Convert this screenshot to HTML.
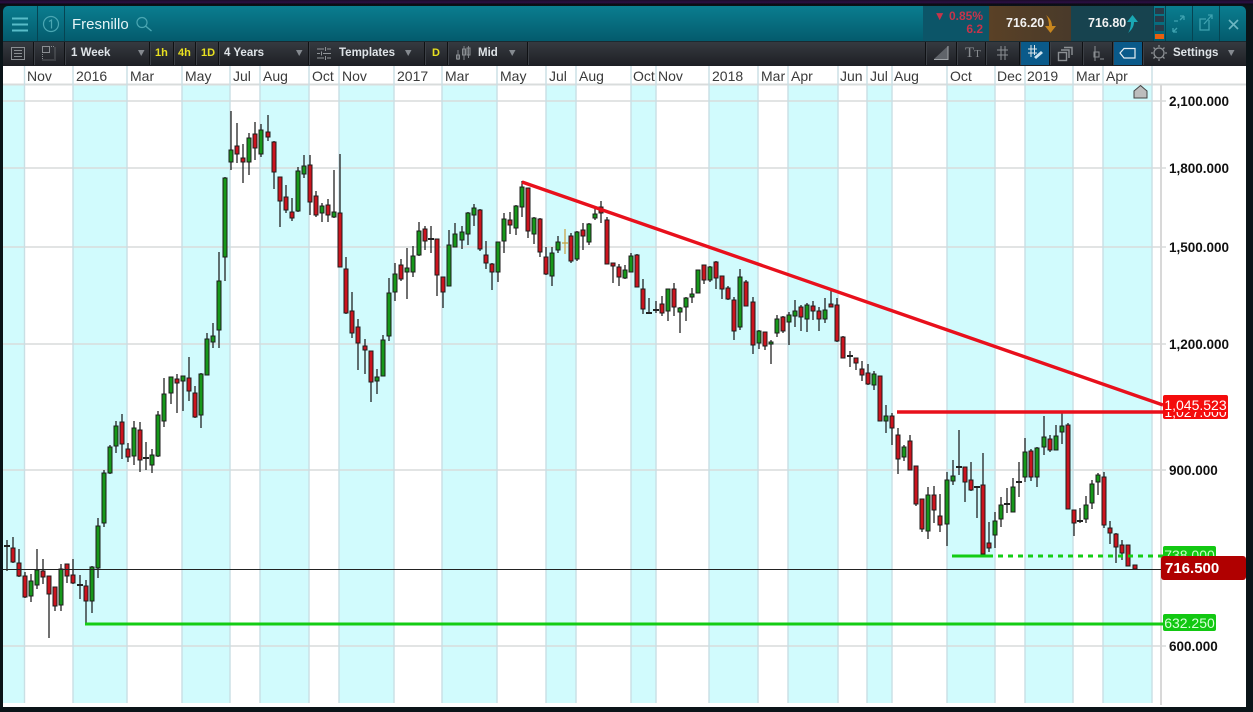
<!DOCTYPE html>
<html><head><meta charset="utf-8"><title>Fresnillo</title>
<style>
html,body{margin:0;padding:0;background:#0a1418;width:1253px;height:712px;overflow:hidden}
body{position:relative;font-family:"Liberation Sans",sans-serif}
.a{position:absolute;white-space:nowrap}
#top{left:0;top:0;width:1253px;height:6px;background:linear-gradient(#1a0c28 0,#2c0f44 40%,#0c0c14 70%,#0a1418 100%)}
#hd{left:3px;top:6px;width:1243px;height:35px;border-radius:5px 5px 0 0;background:linear-gradient(#0a7d90,#045b6d)}
#tb{left:3px;top:41px;width:1243px;height:25px;background:linear-gradient(#363a40,#1d1f24);border-top:1px solid #1a2a30;box-sizing:border-box}
#wh{left:3px;top:66px;width:1243px;height:641px;background:#fff}
.t{font-size:11.5px;font-weight:bold;color:#dfe4e8;line-height:14px;top:46px}
.y{font-size:11px;font-weight:bold;color:#e8e020;line-height:14px;top:46px}
.d{width:1px;height:23px;top:42px;background:#0f1114;box-shadow:1px 0 0 #3c4046}
.m{font-size:14px;color:#3a3a3a;top:68px;line-height:16px}
.p{font-size:13.5px;font-weight:bold;color:#111;left:1169px;line-height:16px}
.tag{color:#fff;font-size:14px;line-height:16px;border-radius:2px;overflow:hidden;text-align:center}
</style></head><body>
<div class="a" id="top"></div>
<div class="a" id="hd"></div>
<div class="a" style="left:923px;top:6px;width:66px;height:35px;background:#0c5568"></div>
<div class="a" style="left:989px;top:6px;width:82px;height:35px;background:linear-gradient(90deg,#5a4126,#493a2a)"></div>
<div class="a" style="left:1071px;top:6px;width:82px;height:35px;background:#17434f"></div>
<div class="a" style="left:930px;top:10px;width:53px;text-align:right;font-size:12px;font-weight:bold;line-height:13px;color:#c8344a">▼ 0.85%<br>6.2</div>
<div class="a" style="left:1006px;top:16px;font-size:12.5px;font-weight:bold;color:#f2f2f2;line-height:15px">716.20</div>
<div class="a" style="left:1088px;top:16px;font-size:12.5px;font-weight:bold;color:#f2f2f2;line-height:15px">716.80</div>
<div class="a" style="left:72px;top:16px;font-size:15px;line-height:18px;color:#e4f4f6">Fresnillo</div>
<div class="a" id="tb"></div>
<div class="a" id="wh"></div>

<svg class="a" style="left:0;top:0" width="1253" height="712" id="s" xmlns="http://www.w3.org/2000/svg">
<g id="bands" fill="#d1fbfd"><rect x="3" y="85" width="21.5" height="618"/><rect x="73" y="85" width="54" height="618"/><rect x="182" y="85" width="48" height="618"/><rect x="260" y="85" width="49" height="618"/><rect x="339" y="85" width="55" height="618"/><rect x="442" y="85" width="55" height="618"/><rect x="546" y="85" width="30" height="618"/><rect x="631" y="85" width="25" height="618"/><rect x="709" y="85" width="49" height="618"/><rect x="788" y="85" width="50" height="618"/><rect x="867" y="85" width="25" height="618"/><rect x="947" y="85" width="48" height="618"/><rect x="1025" y="85" width="48" height="618"/><rect x="1103" y="85" width="49" height="618"/></g>
<path fill="none" stroke="#d8dcdc" stroke-width="1.4" d="M3 101H1166M3 168H1166M3 247H1166M3 344H1166M3 470H1166M3 646H1166"/>
<path fill="none" stroke="#d9dcdc" stroke-width="2" d="M3 84.5H1246"/>
<path fill="none" stroke="#c9dfe4" stroke-width="1.4" d="M24.5 66V703M73 66V703M127 66V703M182 66V703M230 66V703M260 66V703M309 66V703M339 66V703M394 66V703M442 66V703M497 66V703M546 66V703M576 66V703M631 66V703M656 66V703M709 66V703M758 66V703M788 66V703M838 66V703M867 66V703M892 66V703M947 66V703M995 66V703M1025 66V703M1073 66V703M1103 66V703M1152 66V703"/>
<path fill="none" stroke="#d8d8d8" stroke-width="2" d="M1161 85V705"/>
<g id="candles"></g>
<path d="M3 569.5H1163" stroke="#222" stroke-width="1" fill="none"/>
<path d="M522 182L1163 405M897 412H1163" stroke="#e8101c" stroke-width="3.4" fill="none"/>
<path d="M85 624H1163M952 556H993" stroke="#14cc14" stroke-width="3" fill="none"/>
<path d="M998 556H1163" stroke="#14cc14" stroke-width="3" stroke-dasharray="5 5" fill="none"/>
<polygon points="1140.5,85.5 1147,91 1147,98 1134,98 1134,91" fill="#bdbdbd" stroke="#444"/>

<!-- header icons -->
<path d="M37.5 6V41M64.5 6V41" stroke="#064452" stroke-width="1"/>
<path d="M12 18.5H28M12 24.5H28M12 30.5H28" stroke="#58bcc8" stroke-width="2"/>
<circle cx="51" cy="24" r="7.5" fill="none" stroke="#4aa6b2" stroke-width="1.2"/>
<path d="M49 21.5L51.5 20V28.5" fill="none" stroke="#4aa6b2" stroke-width="1.2"/>
<circle cx="142" cy="22.5" r="5" fill="none" stroke="#4aa6b2" stroke-width="1.2"/>
<path d="M145.5 26L151.5 31" stroke="#4aa6b2" stroke-width="1.4"/>
<path d="M1046 15C1051 19 1052 23 1052 26H1056L1050.5 33L1045 26H1049C1049 22 1048 18 1046 15Z" fill="#c8861e"/>
<path d="M1128 33C1133 29 1134 25 1134 22H1138L1132.5 15L1127 22H1131C1131 26 1130 30 1128 33Z" fill="#1aa8b4"/>
<rect x="1155" y="8" width="9" height="6" fill="#2a3a48"/><rect x="1155" y="16" width="9" height="6" fill="#2a3a48"/><rect x="1155" y="25" width="9" height="6" fill="#2a3a48"/><rect x="1155" y="34" width="9" height="5" fill="#e8600e"/>
<path d="M1165.5 6V41M1192.5 6V41M1219.5 6V41M1153.5 6V41" stroke="#064452" stroke-width="1"/>
<path d="M1174 21L1178 21M1184 16L1180 20M1184 16H1180M1184 16V20M1173 32L1177 28M1173 32H1177M1173 32V28" fill="none" stroke="#3fa2b0" stroke-width="1.3"/>
<path d="M1209 20V30H1200V19H1206M1204 24L1212 15M1208 15H1212V19" fill="none" stroke="#3fa2b0" stroke-width="1.3"/>
<path d="M1229 20L1238 29M1238 20L1229 29" stroke="#6cb6c2" stroke-width="1.6"/>

<!-- toolbar left icons -->
<g fill="none" stroke="#8a8e92" stroke-width="1">
<rect x="11.5" y="47.5" width="13" height="12"/><path d="M14 50.5H22M14 53.5H22M14 56.5H22"/>
<rect x="42.5" y="46.5" width="7" height="6"/><path d="M42.5 54V60H55V47M51 46.5H55" stroke-dasharray="1 1"/>
<path d="M317 49H324M327 49H331M317 53.5H320M323 53.5H331M317 58H324M327 58H331M325.5 47V51M321.5 51.5V55.5M325.5 56V60" stroke="#909498"/>
<path d="M458 50V60M464 46V60M468.5 46V58" stroke="#80848a"/><rect x="456.5" y="55" width="3" height="4"/><rect x="462.5" y="49" width="3" height="6"/><rect x="467" y="48" width="3" height="7"/>
</g>
<g fill="#858a90"><path d="M138 50H144.5L141.2 56Z"/><path d="M296 50H302.5L299.2 56Z"/><path d="M405 50H411.5L408.2 56Z"/><path d="M509 50H515.5L512.2 56Z"/><path d="M1228 50H1234.5L1231.2 56Z"/></g>

<!-- toolbar right icons -->
<rect x="1020" y="42" width="29" height="23" fill="#0a5a8a"/><rect x="1112" y="42" width="30" height="23" fill="#0a5a8a"/>
<path d="M934 59L948 46V59Z" fill="#60646a"/><path d="M934 59.5H948V46" fill="none" stroke="#a0a4a8" stroke-width="1"/>
<path d="M997 50H1008M997 55H1008M1001 46V60M1005 46V60" stroke="#8c9094" fill="none"/>
<path d="M1028 49H1037M1028 53H1037M1031 45V57M1034.5 45V55" stroke="#dfe6ea" fill="none"/>
<path d="M1034 57L1041 51L1043 53L1036 59Z" fill="#cde4f0"/>
<g fill="none" stroke="#8c9094" stroke-width="1.4"><rect x="1058.5" y="52.5" width="8" height="8"/><path d="M1061 50H1069V58M1064 47.5H1072V55"/></g>
<path d="M1095 46V61M1094 52H1099V57H1094ZM1100 59H1104" fill="none" stroke="#8c9094"/>
<path d="M1120 53L1124 48.5H1135V58H1124Z" fill="none" stroke="#e6eef2" stroke-width="1.2"/>
<circle cx="1159" cy="53" r="5" fill="none" stroke="#8c9094" stroke-width="1.3"/>
<path d="M1159 45V47M1159 59V61M1151 53H1153M1165 53H1167M1153.5 47.5L1155 49M1163 57L1164.5 58.5M1153.5 58.5L1155 57M1163 49L1164.5 47.5" stroke="#8c9094" stroke-width="1.3"/>
</svg>

<div class="a d" style="left:33px"></div><div class="a d" style="left:64px"></div><div class="a d" style="left:149px"></div><div class="a d" style="left:173px"></div><div class="a d" style="left:195px"></div><div class="a d" style="left:218px"></div><div class="a d" style="left:308px"></div><div class="a d" style="left:424px"></div><div class="a d" style="left:447px"></div><div class="a d" style="left:527px"></div><div class="a d" style="left:925px"></div><div class="a d" style="left:956px"></div><div class="a d" style="left:985px"></div><div class="a d" style="left:1019px"></div><div class="a d" style="left:1049px"></div><div class="a d" style="left:1082px"></div><div class="a d" style="left:1112px"></div><div class="a d" style="left:1142px"></div>
<div class="a t" style="left:71px">1 Week</div>
<div class="a y" style="left:155px">1h</div><div class="a y" style="left:178px">4h</div><div class="a y" style="left:201px">1D</div>
<div class="a t" style="left:224px">4 Years</div>
<div class="a t" style="left:339px">Templates</div>
<div class="a y" style="left:432px">D</div>
<div class="a t" style="left:478px">Mid</div>
<div class="a" style="left:965px;top:45px;font-family:'Liberation Serif',serif;font-size:15px;color:#888c90;line-height:16px">T<span style="font-size:11px">T</span></div>
<div class="a t" style="left:1173px;font-size:11.5px">Settings</div>

<div class="a m" style="left:27px">Nov</div><div class="a m" style="left:76px">2016</div><div class="a m" style="left:130px">Mar</div><div class="a m" style="left:185px">May</div><div class="a m" style="left:233px">Jul</div><div class="a m" style="left:263px">Aug</div><div class="a m" style="left:312px">Oct</div><div class="a m" style="left:342px">Nov</div><div class="a m" style="left:397px">2017</div><div class="a m" style="left:445px">Mar</div><div class="a m" style="left:500px">May</div><div class="a m" style="left:549px">Jul</div><div class="a m" style="left:579px">Aug</div><div class="a m" style="left:633px">Oct</div><div class="a m" style="left:658px">Nov</div><div class="a m" style="left:712px">2018</div><div class="a m" style="left:761px">Mar</div><div class="a m" style="left:791px">Apr</div><div class="a m" style="left:840px">Jun</div><div class="a m" style="left:870px">Jul</div><div class="a m" style="left:894px">Aug</div><div class="a m" style="left:950px">Oct</div><div class="a m" style="left:997px">Dec</div><div class="a m" style="left:1027px">2019</div><div class="a m" style="left:1076px">Mar</div><div class="a m" style="left:1106px">Apr</div>

<div class="a p" style="top:94px">2,100.000</div>
<div class="a p" style="top:161px">1,800.000</div>
<div class="a p" style="top:240px">1,500.000</div>
<div class="a p" style="top:337px">1,200.000</div>
<div class="a p" style="top:463px">900.000</div>
<div class="a p" style="top:639px">600.000</div>

<div class="a tag" style="left:1163px;top:403px;width:65px;height:16px;background:#f40c0c;line-height:19px">1,027.000</div>
<div class="a tag" style="left:1163px;top:395px;width:65px;height:17px;background:#f40c0c;line-height:20px">1,045.523</div>
<div class="a tag" style="left:1163px;top:546px;width:53px;height:12px;background:#12c812;color:#c8ffc8;line-height:19px">738.000</div>
<div class="a tag" style="left:1161px;top:556px;width:85px;height:24px;background:#b00000;border-radius:3px;font-size:15px;font-weight:bold;line-height:26px;text-align:left;padding-left:4px;box-sizing:border-box">716.500</div>
<div class="a tag" style="left:1163px;top:614px;width:53px;height:17px;background:#12c812;color:#d8ffd8;line-height:19px">632.250</div>

<script>
var d="7,540,545,547,571,k 13,537,548,562,563,r 19,549,563,576,577,r 25,572,576,597,598,r 31,574,581,596,602,g 37,549,570,585,589,g 43,559,571,577,584,r 49,576,576,594,638,r 55,587,587,606,611,r 61,564,569,605,611,g 67,564,564,576,583,r 73,559,575,583,584,r 80,575,584,586,599,k 86,580,586,601,623,r 92,566,567,601,613,g 98,518,526,568,578,g 104,470,473,523,527,g 110,445,447,473,474,g 116,421,426,446,453,g 122,414,422,444,459,r 128,443,449,457,462,r 134,421,428,456,465,g 140,422,430,460,472,r 146,442,457,459,470,k 152,449,455,465,473,g 158,411,415,456,457,g 164,378,394,421,427,g 171,377,377,393,404,g 177,374,379,383,413,r 183,376,376,381,411,g 189,357,378,391,401,r 195,386,393,417,418,r 201,373,374,415,428,g 207,333,339,375,375,g 213,323,336,342,348,g 219,252,281,330,348,g 225,177,178,257,281,g 231,111,150,162,170,g 237,123,146,154,163,r 243,144,158,162,183,r 249,133,138,162,175,g 255,122,134,148,160,r 261,124,130,154,157,g 268,115,132,137,141,r 274,141,142,172,189,r 280,177,177,201,227,r 286,185,197,210,213,r 292,198,212,218,221,r 298,167,171,211,212,g 304,155,166,174,178,g 310,155,165,202,215,r 316,191,196,215,217,r 322,203,206,213,222,g 328,199,205,215,222,r 334,170,212,217,218,g 340,154,213,267,267,r 346,257,269,313,314,r 352,292,311,333,338,r 358,319,327,343,370,r 365,339,346,350,374,r 371,351,351,382,402,r 377,369,377,381,394,g 383,335,340,376,376,g 389,278,293,336,341,g 395,263,274,292,301,g 401,259,265,279,281,r 407,248,268,272,299,g 413,246,256,272,277,g 419,222,231,255,256,g 425,226,229,241,250,r 431,226,238,240,253,k 437,239,239,275,296,r 443,277,277,292,308,r 449,230,245,286,286,g 455,223,234,247,247,g 462,226,232,240,249,g 468,212,213,234,245,g 474,204,208,215,226,g 480,209,210,249,251,r 486,241,255,263,269,r 492,263,264,272,290,r 498,242,242,272,282,g 504,213,219,241,253,g 510,212,220,225,234,r 516,205,206,228,235,g 522,181,187,207,217,g 528,188,188,231,238,r 534,217,218,234,244,g 540,218,219,252,257,r 546,247,257,274,275,r 552,247,253,276,286,g 558,236,242,250,253,g 571,233,236,261,263,r 577,231,232,259,261,g 583,223,230,236,250,r 589,223,224,242,245,g 595,209,214,218,220,g 601,201,207,213,223,r 607,217,220,264,264,r 613,263,263,266,283,r 619,264,267,277,286,r 625,265,270,278,279,g 631,253,256,272,272,g 637,254,255,287,287,r 643,279,289,309,314,r 649,298,312,314,314,k 656,301,309,311,313,k 662,296,304,313,316,r 668,289,289,311,321,g 674,283,289,307,316,r 680,307,308,312,333,g 686,297,298,307,321,g 692,288,294,297,303,g 698,270,270,293,293,g 704,265,265,280,284,r 710,266,267,280,282,g 716,261,262,278,289,r 722,276,276,289,299,r 728,286,288,299,300,r 734,297,300,331,340,r 740,269,277,327,330,g 746,280,282,306,306,r 753,297,302,345,354,r 759,330,331,343,349,g 765,332,332,346,350,r 771,340,342,344,364,g 777,315,319,333,337,g 783,316,317,331,333,r 789,312,315,322,345,g 795,300,311,316,327,g 801,305,307,317,331,r 807,303,305,319,332,g 813,301,306,311,320,r 819,307,311,319,331,r 825,298,310,319,323,g 831,289,304,307,307,r 837,298,305,341,342,r 843,336,337,358,358,r 850,351,355,357,367,k 856,358,358,363,370,r 862,361,369,375,381,r 868,364,373,384,385,r 874,371,374,385,390,g 880,376,376,421,421,r 886,405,416,421,433,g 892,413,416,428,445,r 898,428,435,459,474,r 904,445,447,457,461,g 910,435,441,470,470,r 916,466,466,504,506,r 922,499,499,529,532,r 928,487,495,531,539,g 934,486,495,510,523,r 940,494,516,525,532,r 947,472,480,524,546,g 953,460,476,481,485,g 959,430,466,468,475,k 965,467,467,482,502,r 971,462,480,490,491,r 977,487,486,488,518,k 983,453,485,554,554,r 989,522,543,548,552,r 995,512,521,535,548,g 1001,497,505,519,527,g 1007,488,503,505,513,k 1013,478,487,512,512,g 1019,462,481,483,497,k 1025,438,452,477,482,g 1031,449,451,477,481,r 1037,447,448,477,487,g 1044,416,437,447,455,g 1050,435,439,450,452,r 1056,425,436,450,450,g 1062,413,426,432,444,g 1068,423,425,509,509,r 1074,510,510,523,536,r 1080,508,520,522,523,k 1086,496,505,519,523,g 1092,480,484,503,509,g 1098,473,475,482,495,g 1104,472,477,525,528,r 1110,521,528,533,544,r 1116,533,534,547,563,r 1122,540,545,553,560,r 1128,545,545,566,566,r 1135,565,565,569,569,r".split(" ");
var col={g:"#16981a",r:"#cc141e",k:"#222"},h="";
d.forEach(function(s){var a=s.split(","),x=+a[0],H=+a[1],t=+a[2],b=+a[3],l=+a[4],c=a[5];
h+='<path d="M'+x+' '+H+'V'+l+'" stroke="#111" stroke-width="1.2"/>';
if(c=="k")h+='<rect x="'+(x-3)+'" y="'+t+'" width="6" height="'+(b-t)+'" fill="#222"/>';
else h+='<rect x="'+(x-2)+'" y="'+t+'" width="4" height="'+(b-t)+'" fill="'+col[c]+'" stroke="#1c1c1c" stroke-width="1"/>';});
h+='<path d="M565 229V254M562 243H568" stroke="#c8a040" stroke-width="1.2"/>';
document.getElementById("candles").innerHTML=h;
</script>
</body></html>
